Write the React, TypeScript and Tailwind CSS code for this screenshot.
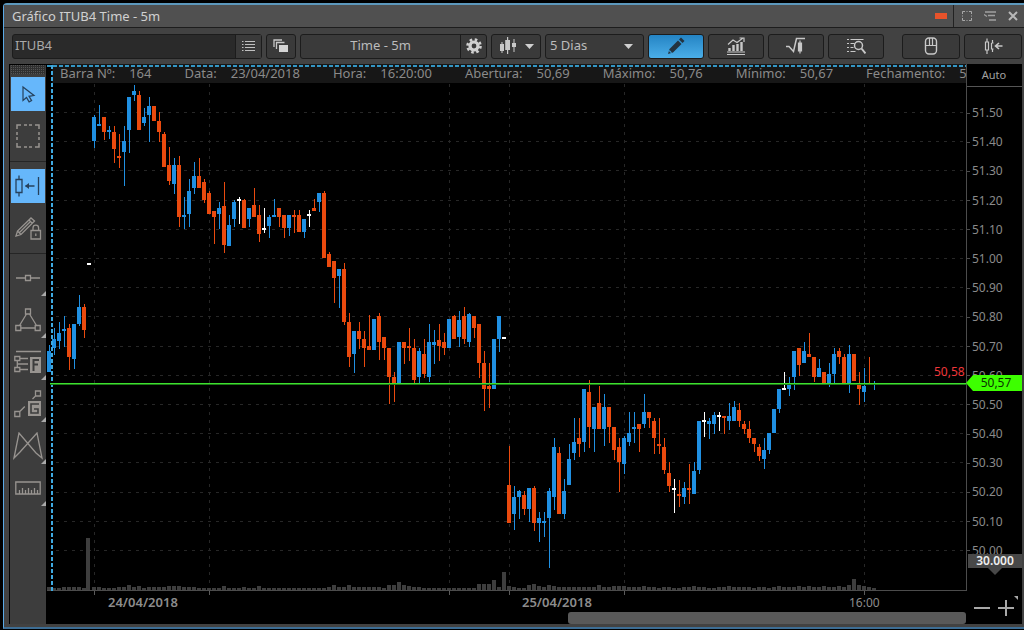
import React from "react";

type Bar = [string, number, number, number, number];

const LEFT = 46;
const TOP = 64;

// Each bar: direction, high, body top, body bottom, low (in canvas units, one bar every 5 units).
const OPENING: Bar[] = [
  ["b", 345, 351, 372, 372], ["b", 328, 339, 348, 355], ["b", 322, 333, 341, 349], ["b", 316, 329, 331, 347],
  ["r", 324, 328, 357, 370], ["b", 324, 324, 359, 369], ["b", 295, 307, 324, 326], ["r", 304, 307, 330, 338],
  ["w", 263, 263, 265, 265],
];

const SESSIONS: Bar[] = [
  ["b", 115, 117, 141, 148], ["b", 105, 124, 126, 126], ["r", 117, 117, 132, 140], ["b", 126, 130, 132, 139],
  ["r", 126, 132, 149, 163], ["r", 134, 156, 158, 168], ["b", 126, 141, 152, 186], ["b", 97, 97, 130, 153],
  ["b", 85, 91, 95, 101], ["r", 91, 95, 130, 130], ["b", 108, 117, 123, 126], ["b", 97, 106, 115, 142],
  ["r", 106, 106, 121, 121], ["r", 112, 121, 132, 142], ["r", 132, 134, 167, 167], ["r", 147, 165, 181, 185],
  ["b", 158, 165, 184, 194], ["r", 156, 165, 217, 227], ["b", 197, 215, 217, 229], ["b", 179, 191, 214, 227],
  ["b", 162, 176, 188, 194], ["r", 158, 176, 188, 188], ["r", 179, 182, 200, 203], ["r", 191, 193, 214, 214],
  ["r", 211, 211, 217, 244], ["b", 202, 208, 214, 229], ["r", 182, 206, 245, 253], ["b", 215, 225, 246, 246],
  ["b", 200, 202, 219, 227], ["w", 197, 199, 201, 224], ["r", 199, 200, 228, 228], ["b", 208, 208, 219, 227],
  ["r", 188, 205, 217, 217], ["r", 205, 215, 234, 242], ["w", 208, 228, 230, 233], ["b", 215, 217, 226, 238],
  ["b", 199, 215, 217, 217], ["r", 208, 208, 217, 227], ["r", 215, 215, 228, 238], ["b", 215, 215, 228, 236],
  ["r", 210, 215, 217, 233], ["r", 210, 215, 232, 232], ["b", 219, 219, 232, 238], ["w", 210, 214, 216, 227],
  ["r", 199, 208, 211, 211], ["b", 193, 193, 202, 212], ["r", 191, 193, 258, 258], ["r", 252, 254, 267, 267],
  ["r", 261, 261, 278, 303], ["b", 269, 269, 276, 308], ["r", 263, 269, 322, 325], ["r", 313, 322, 357, 367],
  ["b", 331, 331, 354, 373], ["r", 322, 331, 339, 349], ["r", 331, 339, 348, 367], ["r", 315, 346, 350, 350],
  ["b", 319, 319, 350, 350], ["r", 313, 316, 342, 360], ["r", 337, 337, 348, 360], ["r", 348, 348, 377, 404],
  ["r", 372, 377, 383, 402], ["b", 342, 342, 385, 385], ["r", 342, 342, 348, 364], ["r", 328, 346, 348, 361],
  ["r", 339, 348, 380, 383], ["b", 348, 351, 377, 383], ["r", 339, 354, 374, 378], ["b", 324, 342, 377, 382],
  ["b", 330, 342, 345, 364], ["r", 324, 340, 346, 361], ["r", 333, 342, 348, 355], ["b", 319, 319, 348, 348],
  ["r", 315, 316, 339, 339], ["b", 311, 320, 337, 347], ["r", 307, 316, 339, 344], ["b", 313, 314, 342, 347],
  ["r", 316, 316, 328, 338], ["r", 324, 324, 363, 378], ["r", 351, 363, 389, 411], ["r", 363, 386, 389, 408],
  ["b", 339, 339, 389, 389], ["b", 316, 316, 339, 352], ["w", 337, 337, 339, 339], ["r", 446, 485, 523, 523],
  ["b", 486, 497, 514, 530], ["b", 490, 491, 497, 519], ["r", 491, 495, 509, 515], ["b", 488, 488, 509, 522],
  ["r", 486, 488, 523, 531], ["b", 512, 518, 523, 542], ["b", 512, 521, 523, 537], ["b", 488, 491, 518, 568],
  ["b", 438, 447, 497, 510], ["r", 447, 453, 514, 514], ["b", 479, 491, 514, 519], ["b", 444, 459, 485, 485],
  ["b", 418, 442, 453, 460], ["r", 418, 438, 444, 457], ["b", 389, 389, 442, 452], ["r", 380, 392, 427, 448],
  ["b", 407, 407, 429, 452], ["r", 386, 403, 429, 429], ["b", 394, 407, 429, 446], ["r", 407, 407, 427, 443],
  ["r", 427, 427, 450, 460], ["r", 438, 447, 462, 492], ["b", 436, 438, 464, 474], ["b", 412, 433, 442, 446],
  ["b", 412, 427, 429, 443], ["r", 424, 424, 429, 452], ["b", 394, 412, 424, 428], ["r", 412, 412, 418, 428],
  ["r", 418, 421, 438, 454], ["r", 418, 444, 446, 454], ["r", 438, 447, 470, 474], ["r", 462, 473, 486, 492],
  ["w", 479, 488, 490, 513], ["r", 480, 494, 496, 507], ["b", 482, 488, 497, 504], ["r", 464, 488, 490, 504],
  ["b", 462, 471, 494, 494], ["b", 421, 421, 470, 474], ["w", 412, 420, 422, 437], ["b", 418, 421, 424, 439],
  ["b", 412, 415, 424, 434], ["w", 412, 415, 417, 431], ["r", 416, 416, 418, 434], ["b", 403, 416, 421, 430],
  ["b", 401, 407, 421, 421], ["r", 403, 410, 421, 427], ["r", 421, 424, 429, 434], ["r", 421, 429, 438, 443],
  ["r", 438, 438, 444, 452], ["r", 444, 447, 456, 461], ["b", 438, 450, 459, 469], ["b", 433, 433, 450, 454],
  ["b", 409, 409, 433, 433], ["b", 389, 389, 409, 413], ["w", 372, 388, 390, 390], ["b", 377, 383, 389, 396],
  ["b", 351, 351, 377, 390], ["r", 348, 348, 365, 376], ["b", 342, 351, 363, 363], ["r", 333, 354, 357, 357],
  ["r", 357, 357, 377, 382], ["b", 359, 368, 377, 377], ["r", 372, 372, 383, 383], ["b", 363, 374, 383, 387],
  ["b", 348, 354, 374, 383], ["r", 348, 351, 357, 364], ["r", 354, 357, 385, 385], ["b", 345, 354, 383, 393],
  ["r", 354, 354, 381, 381], ["r", 372, 383, 389, 405], ["b", 368, 386, 392, 402], ["r", 357, 383, 385, 385],
  ["b", 381, 383, 385, 390],
];

const BARS = [...OPENING, ...SESSIONS];
const FILL: Record<string, string> = { b: "#2090e2", r: "#ea4a0e", w: "#ffffff" };

const VOLUME = [
  3, 2, 2, 3, 3, 3, 3, 2, 52, 3, 3, 2, 2, 2, 3, 3, 5, 3, 4, 2, 3, 3, 3, 3, 4, 4, 4, 3, 3, 3, 2, 2, 2, 2, 2, 4, 2, 2, 2, 3,
  2, 2, 4, 2, 2, 2, 2, 2, 2, 2, 2, 2, 2, 2, 2, 2, 3, 5, 3, 3, 5, 3, 3, 3, 3, 3, 3, 2, 5, 5, 8, 5, 4, 3, 3, 2, 2, 2, 2, 2,
  2, 2, 2, 2, 2, 2, 6, 6, 6, 10, 3, 18, 4, 3, 2, 2, 5, 6, 4, 3, 5, 4, 3, 3, 3, 3, 3, 3, 3, 3, 5, 3, 3, 4, 4, 4, 3, 3, 3, 4,
  3, 3, 2, 3, 3, 2, 2, 3, 3, 4, 3, 3, 2, 2, 3, 3, 4, 3, 3, 3, 3, 2, 3, 3, 2, 3, 4, 3, 3, 3, 4, 3, 4, 3, 3, 4, 3, 3, 4, 3,
  5, 11, 5, 4, 3, 2,
];

const PRICES = [
  "51.50", "51.40", "51.30", "51.20", "51.10", "51.00", "50.90", "50.80",
  "50.70", "50.60", "50.50", "50.40", "50.30", "50.20", "50.10", "50.00",
];

const QUOTE = [
  ["Barra Nº:", "164"],
  ["Data:", "23/04/2018"],
  ["Hora:", "16:20:00"],
  ["Abertura:", "50,69"],
  ["Máximo:", "50,76"],
  ["Mínimo:", "50,67"],
  ["Fechamento:", "50,68"],
];

const GRID_X = [94, 209, 449, 509, 624, 864];

function Chart() {
  return (
    <svg className="pointer-events-none absolute inset-0 h-full w-full" aria-label="Candles ITUB4">
      <g transform={`translate(${-LEFT} ${-TOP})`} shapeRendering="crispEdges">
        <g stroke="#272727" strokeDasharray="3 5">
          {PRICES.map((p, i) => {
            const y = Math.round(113 + i * 29.2) - 0.5;
            return <line key={p} x1="56" x2="110%" y1={y} y2={y} />;
          })}
          {GRID_X.map((x) => (
            <line key={x} x1={x + 0.5} x2={x + 0.5} y1="84" y2="590" />
          ))}
        </g>
        {GRID_X.map((x) => (
          <rect key={x} x={x} y="590" width="1" height="5" fill="#5a5a5a" />
        ))}
        {VOLUME.map((h, i) => (
          <rect key={i} x={47 + i * 5 - (h > 50 ? 1 : 0)} y={590 - h} width="4" height={h} fill="#3e3e3e" />
        ))}
        <rect x="47" y="590" width="100%" height="1" fill="#4c4c4c" />
        {BARS.map(([kind, high, top, bottom, low], i) => {
          const x = 49 + i * 5;
          return (
            <g key={i} fill={FILL[kind]}>
              <rect x={x} y={high} width="1" height={low - high} />
              <rect x={x - 2} y={top} width="4" height={Math.max(bottom - top, 1)} />
            </g>
          );
        })}
        <g stroke="#3396c4" strokeWidth="2" strokeDasharray="4 2">
          <line x1="47" x2="110%" y1="66" y2="66" />
          <line x1="52" x2="52" y1="65" y2="591" stroke="#3fa9e0" />
        </g>
        <rect x="50" y="383" width="110%" height="1" fill="#3fe02f" />
        <rect x="50" y="384" width="110%" height="1" fill="#1c7a16" />
      </g>
      <g transform={`translate(${-LEFT} ${-TOP})`} fontFamily="Noto Sans, sans-serif">
        <text x="934" y="376" fontSize="12" fill="#f0373a">50,58</text>
        <g fill="#8c8c8c" fontWeight="600">
          <text x="108" y="607" fontSize="13">24/04/2018</text>
          <text x="522" y="607" fontSize="13">25/04/2018</text>
          <text x="849" y="607" fontSize="12" fontWeight="400">16:00</text>
        </g>
      </g>
    </svg>
  );
}

function Icon({ size = 20, children }: { size?: number; children: React.ReactNode }) {
  return (
    <svg width={size} height={size} viewBox="0 0 20 20" fill="none" stroke="currentColor" strokeWidth="1.2" className="shrink-0">
      {children}
    </svg>
  );
}

const candles = (
  <g fill="currentColor" stroke="none">
    <path d="M2.500 6h1v2h1.500v7h-1.500v2h-1v-2H1V8h1.500zM8 1h1.200v3h1.800v10H9.200v4H8v-4H6.200V4H8zM14.500 3h1v4H17v4h-1.500v5h-1v-5H13V7h1.500z" />
  </g>
);

function ToolButton({ label, className, children }: { label: string; className: string; children: React.ReactNode }) {
  return (
    <button
      type="button"
      aria-label={label}
      className={`flex h-[25px] shrink-0 items-center justify-center rounded-[3px] border border-[#1c1c1c] text-[#c8c8c8] ${className}`}
    >
      {children}
    </button>
  );
}

function SideButton({ label, active, children }: { label: string; active?: boolean; children: React.ReactNode }) {
  return (
    <button
      type="button"
      aria-label={label}
      className={`flex h-[34px] w-[34px] shrink-0 items-center justify-center ${active ? "bg-[#66b7fb] text-[#26415c]" : "text-[#989490]"}`}
    >
      {children}
    </button>
  );
}

function DrawTool({ label, children }: { label: string; children: React.ReactNode }) {
  return (
    <button type="button" aria-label={label} className="relative flex h-[42px] w-full shrink-0 items-center justify-center pt-1.5 text-[#989490]">
      {children}
      <svg className="absolute right-0 bottom-0" width="5" height="5"><path d="M5 0v5H0z" fill="#aaaaaa" /></svg>
    </button>
  );
}

function SideBar() {
  return (
    <nav aria-label="Ferramentas" className="flex w-[37px] shrink-0 flex-col items-center border-t border-l border-black bg-[#3d3d3d]">
      <svg width="34" height="10" className="mb-0.5 shrink-0">
        <defs>
          <pattern id="grip" width="2" height="2" patternUnits="userSpaceOnUse"><rect width="1" height="1" fill="#555" /></pattern>
        </defs>
        <rect width="34" height="9" fill="#303030" />
        <rect width="34" height="9" fill="url(#grip)" />
      </svg>
      <SideButton label="Selecionar" active>
        <Icon><path d="M5 3l11 8.500-5 .8 2.600 4.300-2.500 1.300L8.500 13.500 5 16.500z" /></Icon>
      </SideButton>
      <div className="h-2 shrink-0" />
      <SideButton label="Selecionar área">
        <svg width="24" height="24" fill="none" stroke="currentColor" strokeWidth="1.500"><path d="M1 5V1h4M8 1h3M13 1h3M19 1h4v4M23 8v3M23 13v3M23 19v4h-4M16 23h-3M11 23H8M5 23H1v-4M1 16v-3M1 11V8" /></svg>
      </SideButton>
      <div className="mt-2 mb-[7px] h-px w-full shrink-0 bg-[#252525]" />
      <SideButton label="Mover gráfico" active>
        <svg width="26" height="24" fill="none" stroke="currentColor" strokeWidth="1.300">
          <path d="M1 5.500h6v13H1zM4 1.500v4M4 18.500v4M10.500 12h9M23.500 3v18" />
          <path d="M10 12l4-3v6z" fill="currentColor" stroke="none" />
        </svg>
      </SideButton>
      <div className="h-2 shrink-0" />
      <SideButton label="Bloquear desenhos">
        <svg width="28" height="26" fill="none" stroke="currentColor" strokeWidth="1.300" className="shrink-0">
          <path d="M2 21l1.500-5L17 3l3.500 3L7 19.500zM3.500 16L7 19.500M15 5l3.500 3.500M5.500 17.500L16 7" />
          <path d="M17 15.500h9.500V24H17zM19 15.500v-2.500a2.800 2.800 0 0 1 5.600 0v2.500M21.800 18.500v2.500" />
        </svg>
      </SideButton>
      <div className="mt-2 h-px w-full shrink-0 bg-[#252525]" />
      <DrawTool label="Linha">
        <svg width="24" height="8" fill="none" stroke="currentColor" strokeWidth="1.300"><path d="M0 4h9M15 4h9M9.500 1.500h5v5h-5z" /></svg>
      </DrawTool>
      <DrawTool label="Triângulo">
        <svg width="26" height="24" fill="none" stroke="currentColor" strokeWidth="1.300">
          <path d="M10.500 1h5v5h-5zM.800 17.500h5v5h-5zM20.200 17.500h5v5h-5zM11.500 6L4.500 17.500M14.500 6l7 11.500M5.800 20h14.400" />
        </svg>
      </DrawTool>
      <DrawTool label="Fibonacci">
        <svg width="28" height="24" fill="none" stroke="currentColor" strokeWidth="1.300">
          <path d="M2 1.500h25M.800 6.500h5v4h-5zM.800 17.500h5v4h-5zM5.800 8.500H14M3.300 10.500v7M3.300 14H14M5.800 19.500H14" />
          <path d="M16 7h11v16H16z" fill="currentColor" stroke="none" />
          <path d="M19.500 21V10H25M19.500 14.500H24" stroke="#3d3d3d" strokeWidth="2" />
        </svg>
      </DrawTool>
      <DrawTool label="Gann">
        <svg width="28" height="28" fill="none" stroke="currentColor" strokeWidth="1.300">
          <path d="M21.500 1h5v5h-5zM.800 21.500h5v5h-5zM5.800 21.500l5-5M18.500 9l3-3" />
          <path d="M14 11h13v15H14z" fill="currentColor" stroke="none" />
          <path d="M25 14h-8v9h7v-4h-4" stroke="#3d3d3d" strokeWidth="1.600" />
        </svg>
      </DrawTool>
      <DrawTool label="Padrão XABCD">
        <svg width="30" height="28" fill="none" stroke="currentColor" strokeWidth="1.300"><path d="M1 26L6 1l17 20 6 5L24 1 7 20z" /></svg>
      </DrawTool>
      <DrawTool label="Régua">
        <svg width="26" height="14" fill="none" stroke="currentColor" strokeWidth="1.300">
          <path d="M.800 1h24.400v12H.800zM4.500 9v4M7.500 7v6M10.500 9v4M13.500 7v6M16.500 9v4M19.500 7v6M22.500 9v4" />
        </svg>
      </DrawTool>
    </nav>
  );
}

function PriceScale() {
  return (
    <aside className="relative flex w-14 shrink-0 flex-col bg-black text-[#8a8a8a]">
      <button type="button" className="h-[23px] shrink-0 border-b border-[#555] text-[11px] text-[#a0a0a0]">Auto</button>
      <ol className="mt-[18px] flex h-[454px] shrink-0 flex-col justify-between text-[12px] leading-4">
        {PRICES.map((p) => (
          <li key={p} className="flex items-center gap-0.5"><span className="h-px w-1 bg-[#4c4c4c]" />{p}</li>
        ))}
      </ol>
      <div className="absolute top-0 left-0 h-[527px] w-px bg-[#4c4c4c]" />
      <output className="absolute top-[311px] left-0 flex h-4 w-full items-center justify-center text-[12px] text-[#0b3300]">
        <svg viewBox="0 0 56 16" preserveAspectRatio="none" className="absolute inset-0 h-full w-full"><path d="M0 8l7-8h49v16H7z" fill="#3dff00" /></svg>
        <span className="relative pl-1">50,57</span>
      </output>
      <output className="absolute top-[490px] left-0.5 flex h-[14px] w-[54px] items-center justify-center bg-[#484848] text-[12px] font-semibold text-[#eeeeee]">
        30.000
        <svg width="14" height="7" className="absolute top-full"><path d="M0 0h14L7 7z" fill="#484848" /></svg>
      </output>
      <div className="mt-auto flex h-[30px] shrink-0 items-center justify-center gap-2 pb-0.5 text-[#a8a8a8]">
        <button type="button" aria-label="Diminuir zoom"><svg width="16" height="16"><path d="M0 7h16v2H0z" fill="currentColor" /></svg></button>
        <button type="button" aria-label="Aumentar zoom" className="relative">
          <svg width="16" height="16"><path d="M0 7h7V0h2v7h7v2H9v7H7V9H0z" fill="currentColor" /></svg>
          <svg width="4" height="4" className="absolute -top-1 -right-1"><path d="M0 0h4v4z" fill="currentColor" /></svg>
        </button>
      </div>
    </aside>
  );
}

const Arrow = () => (
  <svg width="9" height="5" className="shrink-0"><path d="M0 0h9L4.500 5z" fill="#d0d0d0" /></svg>
);

export default function App() {
  return (
    <div className="flex h-screen flex-col overflow-hidden bg-black pt-[3px] pb-px pl-[3px] font-['Noto_Sans',sans-serif]">
      <div className="flex min-h-0 flex-1 flex-col rounded-tl border-t-2 border-b-2 border-l border-t-[#5c98bd] border-b-[#3d6d94] border-l-[#5aa9e6] bg-[#424242]">
        <header className="flex h-[23px] shrink-0 items-center border-b border-[#1d1d1d] bg-[#505050] pl-2 text-[13px] text-[#d0d0d0]">
          <h1 className="flex-1 pt-0.5">Gráfico ITUB4 Time - 5m</h1>
          <span className="mr-1.5 h-1.5 w-3 bg-[#e8532b]" />
          <div className="flex h-full items-center gap-3 border-l border-[#222] pr-1.5 pl-2">
            <button type="button" aria-label="Maximizar">
              <svg width="10" height="10" fill="none" stroke="#a8a8a8"><path d="M.500 3V.500H3M7 .500h2.500V3M9.500 7v2.500H7M3 9.500H.500V7M4.500 .500h1M4.500 9.500h1M.500 4.500v1M9.500 4.500v1" /></svg>
            </button>
            <button type="button" aria-label="Opções">
              <svg width="12" height="10" fill="none" stroke="#a0a0a0" strokeWidth="1.300"><path d="M1 1h11M4 4.500h7M5 9h7M0 3.500l3 2" /></svg>
            </button>
            <button type="button" aria-label="Fechar">
              <svg width="10" height="10" fill="none" stroke="#b8b8b8" strokeWidth="2"><path d="M1 1l8 8M9 1l-8 8" /></svg>
            </button>
          </div>
        </header>

        <div className="flex h-9 shrink-0 items-center gap-1 pr-0.5 pl-2 text-[13px] text-[#bcbcbc]">
          <div className="flex h-[25px] min-w-0 flex-1 rounded-[3px] border border-[#1c1c1c] bg-[#2a2a2a]">
            <input aria-label="Ativo" defaultValue="ITUB4" className="min-w-0 flex-1 bg-transparent px-0.5 text-[#a9a9a9] outline-none" />
            <button type="button" aria-label="Lista de ativos" className="flex w-[26px] shrink-0 items-center justify-center border-l border-[#1c1c1c] bg-[#3a3a3a]">
              <svg width="13" height="12" fill="none" stroke="#c0c0c0"><path d="M0 1.500h1.500M3 1.500h10M0 4.500h1.500M3 4.500h10M0 7.500h1.500M3 7.500h10M0 10.500h1.500M3 10.500h10" /></svg>
            </button>
          </div>
          <ToolButton label="Janelas" className="w-[30px] bg-[#3a3a3a]">
            <svg width="16" height="14" fill="none" stroke="#c8c8c8" strokeWidth="1.300"><path d="M1 8V1h8M3.500 10V3.500h8" /><path d="M6 6h9v7H6z" fill="#d4d4d4" stroke="none" /></svg>
          </ToolButton>
          <div className="flex h-[25px] w-[187px] shrink-0 rounded-[3px] border border-[#1c1c1c] bg-[#3a3a3a]">
            <button type="button" className="flex-1">Time - 5m</button>
            <button type="button" aria-label="Configurar" className="flex w-[26px] items-center justify-center border-l border-[#1c1c1c]">
              <svg width="16" height="16" viewBox="0 0 16 16" fill="none" stroke="#d0d0d0">
                <circle cx="8" cy="8" r="4" strokeWidth="3.200" />
                <circle cx="8" cy="8" r="6.500" strokeWidth="2.600" strokeDasharray="2.550 2.550" />
              </svg>
            </button>
          </div>
          <ToolButton label="Tipo de gráfico" className="w-[50px] gap-1.5 bg-[#3a3a3a]">
            <Icon>{candles}</Icon>
            <Arrow />
          </ToolButton>
          <div className="relative flex h-[25px] w-[99px] shrink-0 items-center rounded-[3px] border border-[#1c1c1c] bg-[#3a3a3a]">
            <select aria-label="Período" className="h-full w-full appearance-none bg-transparent pl-1 outline-none">
              <option>5 Dias</option>
            </select>
            <div className="pointer-events-none absolute right-2.5"><Arrow /></div>
          </div>
          <ToolButton label="Desenhar" className="w-14 bg-linear-to-b from-[#2484c4] to-[#4aaee8]">
            <Icon><path d="M2 18l1.500-5L12 4.500 15.500 8 7 16.500z" fill="#24333f" stroke="none" /><path d="M13 3.500l2-2L18.500 5l-2 2z" fill="#24333f" stroke="none" /><path d="M3.200 14.500l2.300 2.300" stroke="#3a9bd8" /></Icon>
          </ToolButton>
          <ToolButton label="Indicadores" className="w-14 bg-[#3a3a3a]">
            <Icon><path d="M1 18.500h18M1 16h18" /><path d="M3.500 15v-3M7.500 15V9M11.500 15V8M15.500 15V6" strokeWidth="2.400" /><path d="M2 8.500L7 4l4 2.500 6-4.500M13.500 2H18v4" /></Icon>
          </ToolButton>
          <ToolButton label="Estudos" className="w-14 bg-[#3a3a3a]">
            <Icon><path d="M0 10.500h3l4.500 5L10.500 2.500H19" strokeWidth="1.500" /><path d="M12.500 7v8h3V7zM14 4.500v2.500M14 15v2.500" fill="currentColor" /></Icon>
          </ToolButton>
          <ToolButton label="Pesquisar" className="mr-3.5 w-14 bg-[#3a3a3a]">
            <Icon><path d="M1 3.500h2M4.500 3.500h13M1 7.500h2M4.500 7.500h4M1 11.500h2M4.500 11.500h3M1 15.500h2M4.500 15.500h5" /><circle cx="12.500" cy="9.500" r="4" strokeWidth="1.500" /><path d="M15.500 12.500l4 5" strokeWidth="2" /></Icon>
          </ToolButton>
          <ToolButton label="Mouse" className="w-[58px] bg-[#3a3a3a]">
            <Icon><rect x="4.500" y="2" width="11" height="16" rx="3.500" strokeWidth="1.400" /><path d="M4.500 9.500h11M8.500 2v7.500M11.500 2v7.500" /></Icon>
          </ToolButton>
          <ToolButton label="Ir para o final" className="w-[58px] bg-[#3a3a3a]">
            <Icon><path d="M2.500 6h3v8h-3zM4 2.500V6M4 14v4M8.500 7v6h2M8.500 7h2M9.500 4v3M9.500 13v3" /><path d="M13 10h6.500M16 7l-3.500 3 3.500 3" strokeWidth="1.600" /></Icon>
          </ToolButton>
        </div>

        <main className="mr-0.5 mb-[3px] ml-[5px] flex min-h-0 flex-1 bg-black">
          <SideBar />
          <section className="relative flex min-w-0 flex-1 flex-col overflow-hidden">
            <dl className="ml-1.5 flex h-[19px] shrink-0 items-start gap-[33px] overflow-hidden bg-[#171717] pl-2 text-[13px] leading-[18px] whitespace-nowrap text-[#8a8a8a]">
              {QUOTE.map(([name, value]) => (
                <div key={name} className="flex shrink-0 gap-3.5">
                  <dt>{name}</dt>
                  <dd>{value}</dd>
                </div>
              ))}
            </dl>
            <Chart />
            <div className="mt-auto flex h-3 shrink-0 justify-end">
              <div role="scrollbar" aria-label="Histórico" aria-controls="chart" aria-valuenow={100} className="w-[398px] rounded-[3px] bg-[#595959]" />
            </div>
          </section>
          <PriceScale />
        </main>
      </div>
    </div>
  );
}
